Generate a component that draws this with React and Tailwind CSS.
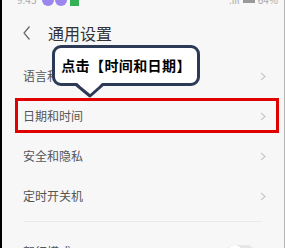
const rows = ['语言和输入法', '日期和时间', '安全和隐私', '定时开关机']

const Chevron = () => (
  <svg width="6" height="9" viewBox="0 0 6 9" className="shrink-0">
    <path d="M1 1 L5 4.5 L1 8" fill="none" stroke="#c8c8c8" strokeWidth="1.2" />
  </svg>
)

export default function App() {
  return (
    <div
      className="relative w-[285px] h-[248px] overflow-hidden bg-[#f7f7f8] border-l-2 border-l-black border-r border-r-[#b5b5b5]"
      style={{ fontFamily: '"Noto Sans CJK SC", "Noto Sans", sans-serif' }}
    >
      {/* status bar */}
      <div className="h-[10px] flex items-start justify-between pl-[15px] pr-[6px]">
        <div className="flex items-center gap-[1px] -mt-[8px]">
          <span className="text-[10px] text-[#aaa] mr-[5px]">9:45</span>
          <span className="w-[12px] h-[12px] rounded-full bg-[#9a86ee]" />
          <span className="w-[12px] h-[12px] rounded-full bg-[#9a86ee]" />
          <span className="w-[9px] h-[12px] ml-[2px] bg-[#35b155]" />
        </div>
        <div className="flex items-center gap-[3px] -mt-[8px] text-[10px] text-[#aaa]">
          <span>.ııl</span>
          <span className="w-[12px] h-[6px] bg-[#999]" />
          <span>64%</span>
        </div>
      </div>

      {/* header */}
      <div className="h-[46px] flex items-center pl-[20px] text-[#333]">
        <svg width="10" height="16" viewBox="0 0 10 16">
          <path d="M7.5 1.5 L2 8 L7.5 14.5" fill="none" stroke="#666" strokeWidth="1.2" />
        </svg>
        <span className="ml-[16px] text-[16px] leading-none">通用设置</span>
      </div>

      {/* list */}
      <div>
        {rows.map(r => (
          <div key={r} className="h-[40px] flex items-center justify-between pl-[21px] pr-[18px]">
            <span className="text-[12px] text-[#555]">{r}</span>
            <Chevron />
          </div>
        ))}
        <div className="mx-[22px] mt-[5px] h-px bg-[#eaeaea]" />
        <div className="h-[40px] flex items-center justify-between pl-[21px] pr-[30px] mt-[10px]">
          <span className="text-[12px] text-[#555]">驾行模式</span>
          <span className="w-[26px] h-[14px] rounded-full bg-[#e6e6e6] relative">
            <span className="absolute left-0 top-0 w-[14px] h-[14px] rounded-full bg-white shadow" />
          </span>
        </div>
      </div>

      {/* red highlight */}
      <div className="absolute left-[13px] top-[98px] w-[264px] h-[35px] border-[3px] border-[#e00000]" />

      {/* tooltip */}
      <div className="absolute left-[50px] top-[45px] w-[148px] h-[41px] bg-white border-[3px] border-[#2c3a56] rounded-[9px] flex items-center justify-center">
        <span className="text-[14px] font-bold text-black tracking-[0.4px]">点击【时间和日期】</span>
      </div>
      <svg className="absolute left-[70px] top-[80px]" width="36" height="20" viewBox="0 0 36 20">
        <polygon points="4,2 18,16 31,2" fill="white" />
        <polyline points="4,4.5 18,16 31,4.5" fill="none" stroke="#2c3a56" strokeWidth="3" strokeLinejoin="round" />
      </svg>
    </div>
  )
}
